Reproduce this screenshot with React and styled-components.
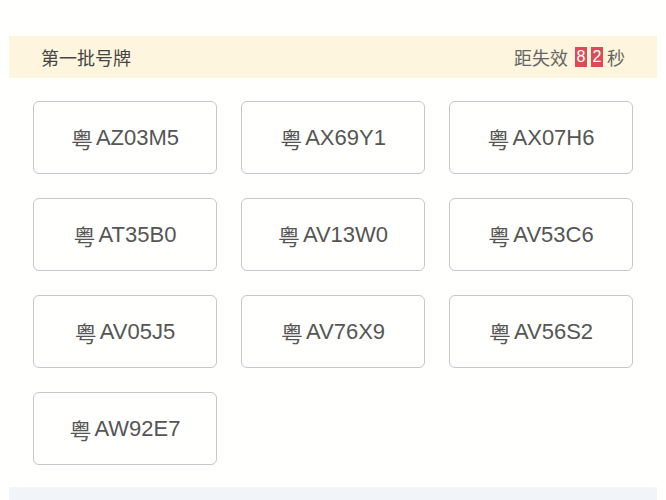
import React from 'react'
import styled, { createGlobalStyle } from 'styled-components'

const GlobalStyle = createGlobalStyle`
    html, body {
        margin: 0;
        padding: 0;
        background: #fffffd;
        font-family: "Liberation Sans", "Noto Sans CJK SC", sans-serif;
    }
`

const Page = styled.div`
    width: 666px;
    height: 500px;
    overflow: hidden;
    padding: 36px 9px 0 9px;
    box-sizing: border-box;
`

const Header = styled.div`
    height: 42px;
    background: #fdf5dd;
    display: flex;
    align-items: center;
    justify-content: space-between;
    padding: 0 32px;
    color: #454545;
    font-size: 18px;
`

const Title = styled.span`
    font-family: "Noto Sans CJK SC", sans-serif;
`

const Countdown = styled.div`
    display: flex;
    align-items: center;
    gap: 4px;
    font-family: "Noto Sans CJK SC", sans-serif;
    color: #666;
`

const Digit = styled.span`
    display: inline-block;
    width: 12px;
    height: 20px;
    line-height: 20px;
    text-align: center;
    background: #dc4b55;
    color: #fff;
    font-family: "Liberation Sans", sans-serif;
    font-size: 16px;
    margin-left: ${p => (p.$first ? '3px' : '0')};
`

const Grid = styled.div`
    display: grid;
    grid-template-columns: repeat(3, 184px);
    grid-auto-rows: 73px;
    gap: 24px;
    padding: 23px 24px 22px 24px;
`

const Plate = styled.div`
    border: 1px solid #c6c6cf;
    border-radius: 6px;
    display: flex;
    align-items: center;
    justify-content: center;
    color: #555;
    font-size: 22px;
    gap: 3px;
    box-sizing: border-box;
`

const Province = styled.span`
    font-family: "Noto Sans CJK SC", sans-serif;
`

const Footer = styled.div`
    height: 40px;
    background: #f1f5fa;
`

const plates = [
    'AZ03M5', 'AX69Y1', 'AX07H6',
    'AT35B0', 'AV13W0', 'AV53C6',
    'AV05J5', 'AV76X9', 'AV56S2',
    'AW92E7',
]

function App() {
    return (
        <>
            <GlobalStyle />
            <Page>
                <Header>
                    <Title>第一批号牌</Title>
                    <Countdown>
                        距失效
                        <Digit $first>8</Digit>
                        <Digit>2</Digit>
                        秒
                    </Countdown>
                </Header>
                <Grid>
                    {plates.map(p => (
                        <Plate key={p}>
                            <Province>粤</Province>
                            <span>{p}</span>
                        </Plate>
                    ))}
                </Grid>
                <Footer />
            </Page>
        </>
    )
}

export default App
